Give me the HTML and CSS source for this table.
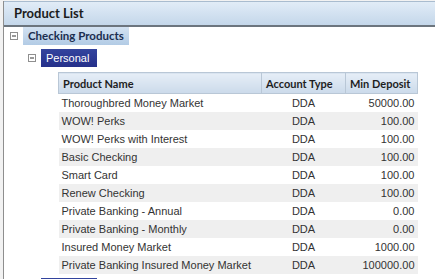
FILE: index.html
```html
<!DOCTYPE html>
<html lang="en">
<head>
    <meta charset="UTF-8">
    <title>Product List</title>
    <link rel="stylesheet" href="styles.css">
</head>
<body>
    <div class="panel">
        <div class="panel-header">Product List</div>
        <div class="tree">
            <div class="node">
                <span class="toggle"><svg width="8" height="8" viewBox="0 0 8 8"><rect x="0.5" y="0.5" width="7" height="7" fill="#fff" stroke="#8f8f8f"/><line x1="2" y1="4" x2="6" y2="4" stroke="#333"/></svg></span>
                <span class="node-label group">Checking Products</span>
            </div>
            <div class="children">
                <div class="node">
                    <span class="toggle"><svg width="8" height="8" viewBox="0 0 8 8"><rect x="0.5" y="0.5" width="7" height="7" fill="#fff" stroke="#8f8f8f"/><line x1="2" y1="4" x2="6" y2="4" stroke="#333"/></svg></span>
                    <span class="node-label selected">Personal</span>
                </div>
                <table class="products">
                    <thead>
                        <tr>
                            <th class="col-name">Product Name</th>
                            <th class="col-type">Account Type</th>
                            <th class="col-min">Min Deposit</th>
                        </tr>
                    </thead>
                    <tbody>
                        <tr><td>Thoroughbred Money Market</td><td class="type">DDA</td><td class="num">50000.00</td></tr>
                        <tr><td>WOW! Perks</td><td class="type">DDA</td><td class="num">100.00</td></tr>
                        <tr><td>WOW! Perks with Interest</td><td class="type">DDA</td><td class="num">100.00</td></tr>
                        <tr><td>Basic Checking</td><td class="type">DDA</td><td class="num">100.00</td></tr>
                        <tr><td>Smart Card</td><td class="type">DDA</td><td class="num">100.00</td></tr>
                        <tr><td>Renew Checking</td><td class="type">DDA</td><td class="num">100.00</td></tr>
                        <tr><td>Private Banking - Annual</td><td class="type">DDA</td><td class="num">0.00</td></tr>
                        <tr><td>Private Banking - Monthly</td><td class="type">DDA</td><td class="num">0.00</td></tr>
                        <tr><td>Insured Money Market</td><td class="type">DDA</td><td class="num">1000.00</td></tr>
                        <tr><td>Private Banking Insured Money Market</td><td class="type">DDA</td><td class="num">100000.00</td></tr>
                    </tbody>
                </table>
                <!-- next group, only its top edge shows -->
                <div class="node">
                    <span class="node-label selected next"></span>
                </div>
            </div>
        </div>
    </div>
</body>
</html>
```

FILE: styles.css
```css
body {
    margin: 0;
    background-color: #f2f2f2;
    font-family: "Liberation Sans", Arial, sans-serif;
    font-size: 11px;
    color: #333;
}
.panel {
    margin: 1px 0 0 3px;
    height: 300px;
    background-color: white;
    border-left: 1px solid #8e8e8e;
    overflow: hidden;
}
.panel-header {
    height: 23px;
    line-height: 23px;
    padding-left: 10px;
    border-top: 1px solid #a9bccf;
    border-bottom: 2px solid #6c757e;
    background: linear-gradient(#e1ecf7, #c4d7ea);
    font-family: Lato, sans-serif;
    font-weight: bold;
    font-size: 13px;
    color: #1c1c1c;
}
.node {
    display: flex;
    align-items: center;
    height: 18px;
    padding-left: 6px;
}
.toggle {
    display: flex;
    width: 8px;
    height: 8px;
    margin-right: 5px;
}
.node-label {
    height: 18px;
    line-height: 18px;
    padding: 0 5px;
}
.group {
    background: linear-gradient(#d3e2f2, #b2cbe5);
    font-family: Lato, sans-serif;
    font-weight: bold;
    font-size: 11.5px;
    color: #1b2d4f;
}
.selected {
    width: 46px;
    background: linear-gradient(#33449e, #25308a);
    color: white;
}
.selected.next {
    margin-left: 13px;
}
.children {
    margin-left: 18px;
    padding-top: 4px;
}
.children .node + .products {
    margin-top: 5px;
}
.products {
    margin-left: 36px;
    width: 360px;
    border-collapse: collapse;
    table-layout: fixed;
}
.products th {
    height: 20px;
    padding: 0 4px;
    text-align: left;
    white-space: nowrap;
    overflow: hidden;
    background: linear-gradient(#e6eef7, #cbdaea);
    border: 1px solid #b9c7d6;
    font-family: Lato, sans-serif;
    font-weight: bold;
    font-size: 11px;
    color: #1e1e1e;
}
.col-name { width: 194px; }
.col-type { width: 75px; }
.products td {
    height: 18px;
    padding: 0 3px;
    white-space: nowrap;
}
.products tbody tr:nth-child(even) {
    background-color: #efefef;
}
.products td.type {
    text-align: center;
}
.products td.num {
    text-align: right;
}
.products + .node {
    margin-top: 4px;
}
```
